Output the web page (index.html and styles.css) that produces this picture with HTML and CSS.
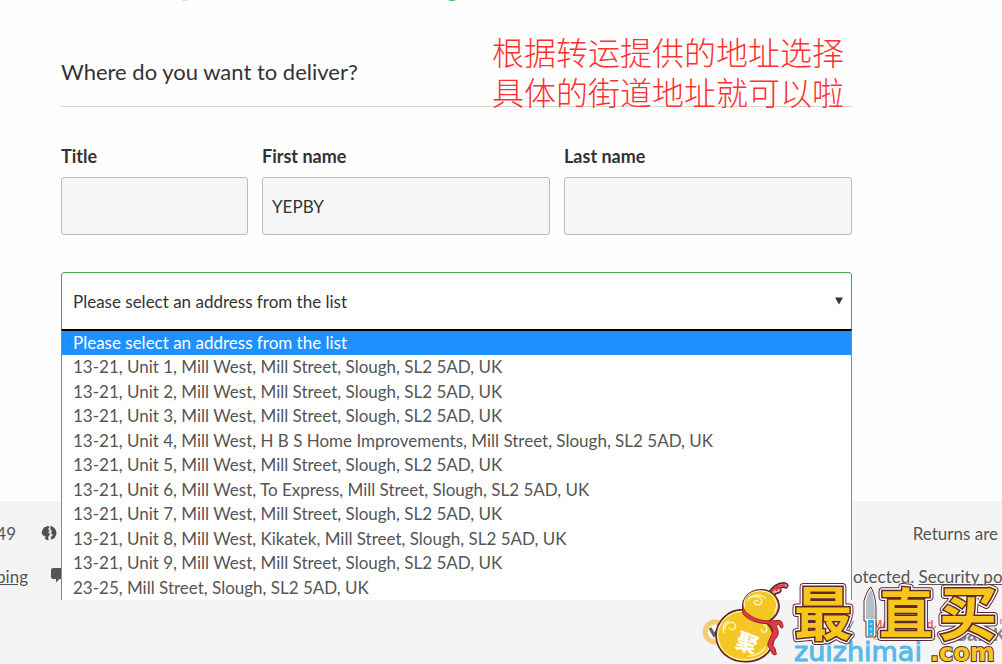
FILE: index.html
```html
<!DOCTYPE html>
<html lang="en">
<head>
<meta charset="utf-8">
<meta name="viewport" content="width=device-width, initial-scale=1">
<title>Delivery details</title>
<link rel="stylesheet" href="styles.css">
</head>
<body>
<div class="steps" aria-hidden="true"><span class="step"></span><span class="step step-active"></span></div>

<main class="delivery">
  <header class="section-head">
    <h1 class="section-title">Where do you want to deliver?</h1>
    <p class="note" lang="zh-CN">根据转运提供的地址选择<br>具体的街道地址就可以啦</p>
  </header>

  <form class="form">
    <div class="names">
      <div class="field">
        <label for="title">Title</label>
        <input id="title" type="text">
      </div>
      <div class="field">
        <label for="first-name">First name</label>
        <input id="first-name" type="text" value="YEPBY">
      </div>
      <div class="field">
        <label for="last-name">Last name</label>
        <input id="last-name" type="text">
      </div>
    </div>

    <div class="address">
      <select class="address-select" aria-label="Address">
        <option>Please select an address from the list</option>
      </select>
      <svg class="arrow" viewBox="0 0 8 8" aria-hidden="true"><path d="M0 0.5H8L4 7.5Z"/></svg>
      <ul class="options" role="listbox" aria-label="Addresses">
        <li class="option option-active" role="option" aria-selected="true">Please select an address from the list</li>
        <li class="option" role="option">13-21, Unit 1, Mill West, Mill Street, Slough, SL2 5AD, UK</li>
        <li class="option" role="option">13-21, Unit 2, Mill West, Mill Street, Slough, SL2 5AD, UK</li>
        <li class="option" role="option">13-21, Unit 3, Mill West, Mill Street, Slough, SL2 5AD, UK</li>
        <li class="option" role="option">13-21, Unit 4, Mill West, H B S Home Improvements, Mill Street, Slough, SL2 5AD, UK</li>
        <li class="option" role="option">13-21, Unit 5, Mill West, Mill Street, Slough, SL2 5AD, UK</li>
        <li class="option" role="option">13-21, Unit 6, Mill West, To Express, Mill Street, Slough, SL2 5AD, UK</li>
        <li class="option" role="option">13-21, Unit 7, Mill West, Mill Street, Slough, SL2 5AD, UK</li>
        <li class="option" role="option">13-21, Unit 8, Mill West, Kikatek, Mill Street, Slough, SL2 5AD, UK</li>
        <li class="option" role="option">13-21, Unit 9, Mill West, Mill Street, Slough, SL2 5AD, UK</li>
        <li class="option" role="option">23-25, Mill Street, Slough, SL2 5AD, UK</li>
      </ul>
    </div>
  </form>
</main>

<footer class="footer">
  <div class="footer-row">
    <div class="footer-left footer-phone">
      <span>49</span>
      <svg class="icon" viewBox="0 0 16 16" aria-hidden="true"><circle cx="8" cy="8" r="7" fill="#dfe3e6"/><path fill="#4f4f4f" d="M1 6L3 2.500 7 1 8.500 2 7 4 8.500 5.500 7 7.500 9 9 7 12 7.500 15.400 4 14 4.500 11 2 10.500 .6 8ZM9.500 .8L13 2.500 15 5.500 15.500 9 13.500 13 10.500 14.800 10 12 12 10 10 8 11 6 9.500 4Z"/></svg>
    </div>
    <p class="footer-right footer-end">Returns are</p>
  </div>
  <div class="footer-row">
    <div class="footer-left">
      <a href="#">ping</a>
      <svg class="icon" viewBox="0 0 16 16" aria-hidden="true"><path fill="#555" d="M2 0H14Q16 0 16 2V9Q16 11 14 11H8.500L5 14.500V11H2Q0 11 0 9V2Q0 0 2 0Z"/></svg>
    </div>
    <p class="footer-right">otected. <a href="#">Security policy</a></p>
  </div>
  <div class="badges">
    <span class="badge norton"><svg class="tick" viewBox="0 0 26 28" aria-hidden="true"><circle cx="13" cy="14" r="10" fill="none" stroke="#fbb93f" stroke-width="5"/><path d="M8 10L12 17 24 2" fill="none" stroke="#222" stroke-width="3"/></svg><b>Norton</b></span>
    <span class="badge visa"><i>Verified by</i><b>VISA</b></span>
    <span class="badge mastercard"><b>MasterCard.</b><b>SecureCode</b></span>
    <span class="badge amex"><small>AMERICAN EX</small><b>SafeKey</b></span>
  </div>
</footer>

<svg class="watermark" viewBox="0 0 302 94" role="img" aria-label="最值买 zuizhimai.com">
  <defs>
    <g id="brand" class="brand"><text x="94" y="65">最</text><text class="brand-mid" x="179" y="64">直</text><text x="239" y="65">买</text></g>
  </defs>
  <g transform="scale(.33333)" stroke-linecap="round" stroke-linejoin="round">
    <path d="M204 73C214 52 233 37 255 39Q270 44 259 54Q246 48 239 56Q247 61 239 67Q225 70 220 77Z" fill="#f3b2b6" stroke="#5c2930" stroke-width="5"/>
    <path d="M215 65Q230 44 254 46M229 60Q234 50 242 57" fill="none" stroke="#e5343d" stroke-width="6"/>
    <path d="M130 120C88 116 48 153 48 196C49 245 89 275 135 275C184 276 216 246 221 211C223 188 213 171 199 157C234 143 247 108 229 83C209 50 158 53 137 82C128 94 127 108 130 120Z" fill="#f5c726" stroke="#5c2930" stroke-width="5"/>
    <path d="M132 124C91 121 53 156 53 196C55 241 91 270 135 270C180 271 211 244 216 211M133 111C126 76 159 60 188 63C224 67 240 101 223 130" fill="none" stroke="#fff" stroke-width="3"/>
    <path d="M143 91C153 73 184 76 185 94C184 108 165 107 162 96Q166 87 174 94M151 84Q173 66 196 84M76 177C73 157 101 150 106 166C109 178 93 184 88 173M72 188Q64 163 85 153M145 259Q180 257 196 231M186 158Q205 170 198 186Q186 190 184 178" fill="none" stroke="#fff5bd" stroke-width="4"/>
    <path d="M128 113C147 144 182 154 214 153L239 151Q252 158 248 174Q240 176 237 162Q225 163 234 181C239 202 219 207 217 225Q228 235 229 253Q218 260 211 239L203 226C205 204 224 191 216 173Q210 163 204 161C172 161 146 151 129 132Z" fill="#e63740" stroke="#8d2932" stroke-width="3"/>
  </g>
  <text class="seal" x="36" y="81" transform="rotate(20 47 73)">聚</text>
  <text class="domain" x="94" y="91">zuizhimai</text>
  <use href="#brand" class="brand-edge"/>
  <use href="#brand" class="brand-gap"/>
  <use href="#brand" class="brand-face"/>
  <g>
    <path d="M166 67V51H164V31Q167 20 171 17Q176 27 176 40V67Z" fill="#fff" stroke="#5c2930" stroke-width="1"/>
    <path d="M166 49V31Q168 22 171 19Q175 30 175 49Z" fill="#b4bfc9"/>
    <path d="M168 50H174V66H168Z" fill="#36b1e3"/>
    <path d="M171 53V65" stroke="#fff" stroke-dasharray="2 3"/>
  </g>
  <text class="tld" x="230" y="91">.com</text>
</svg>
</body>
</html>
```
FILE: styles.css
```css
* { box-sizing: border-box; }

body {
  margin: 0;
  position: relative;
  min-height: 100vh;
  display: flex;
  flex-direction: column;
  overflow-x: hidden;
  background: #fefefe;
  color: #333;
  font: 17px/24px Lato, "Noto Sans CJK SC", sans-serif;
}

h1, p, ul { margin: 0; padding: 0; }

.steps {
  display: flex;
  align-items: flex-end;
  gap: 251px;
  height: 1px;
  padding-left: 177px;
}
.step {
  flex: none;
  width: 16px;
  height: 16px;
  border-radius: 50%;
  background: #dcdcd0;
}
.step-active { background: #4cb85c; }

.delivery { padding: 55px 150px 170px 61px; }

.section-head {
  position: relative;
  padding-bottom: 18px;
  border-bottom: 1px solid #d8d8cc;
}
.section-title {
  font-size: 22px;
  line-height: 32px;
  font-weight: 400;
}
.note {
  position: absolute;
  top: -25px;
  right: 8px;
  color: #ff3030;
  font: 300 32px/40px "Noto Sans CJK SC", sans-serif;
  white-space: nowrap;
}

.form {
  display: flex;
  flex-direction: column;
  gap: 37px;
  padding-top: 37px;
}
.names {
  display: grid;
  grid-template-columns: 187fr 288fr 288fr;
  gap: 14px;
}
.field {
  display: flex;
  flex-direction: column;
  gap: 9px;
  min-width: 0;
}
.field label { font-size: 18px; font-weight: 700; }
.field input {
  width: 100%;
  height: 58px;
  padding: 0 9px;
  border: 1px solid #bbb;
  border-radius: 3px;
  background: #f6f6f6;
  color: inherit;
  font: inherit;
}

.address { position: relative; }
.address-select {
  display: block;
  width: 100%;
  height: 59px;
  padding: 0 11px;
  border: 1px solid #4aa651;
  border-radius: 3px;
  background: #fff;
  color: inherit;
  font: inherit;
  appearance: none;
}
.arrow {
  position: absolute;
  top: 25px;
  right: 9px;
  width: 8px;
  height: 8px;
  fill: #333;
}
.options {
  position: absolute;
  top: 57px;
  left: 0;
  right: 0;
  z-index: 1;
  display: grid;
  grid-auto-rows: 1fr;
  min-height: 271px;
  border: 1px solid #6a8cc0;
  border-top: 2px solid #000;
  border-bottom: 0;
  background: #fff;
  color: #555;
  list-style: none;
}
.option {
  padding: 0 11px;
  white-space: nowrap;
  overflow: hidden;
}
.option-active { background: #1e90ff; color: #fff; }

.footer {
  flex: 1;
  display: flex;
  flex-direction: column;
  gap: 19px;
  padding-top: 21px;
  background: #f4f4f4;
  color: #555;
}
.footer a { color: inherit; }
.footer-row {
  display: flex;
  justify-content: space-between;
}
.footer-left {
  display: flex;
  justify-content: flex-end;
  gap: 23px;
  width: 67px;
  overflow: hidden;
}
.footer-phone {
  gap: 25px;
  padding-right: 10px;
}
.icon {
  flex: none;
  width: 16px;
  height: 16px;
  margin-top: 3px;
}
.footer-right {
  width: 150px;
  padding-left: 1px;
  white-space: nowrap;
  overflow: hidden;
}
.footer-end { padding-right: 4px; text-align: right; }

.badges {
  display: flex;
  justify-content: flex-end;
  gap: 18px;
  height: 40px;
  opacity: 0.7;
}
.badge {
  display: flex;
  flex-direction: column;
  padding-top: 10px;
  overflow: hidden;
  font: 12px/12px "Liberation Sans", sans-serif;
}
.norton {
  flex-direction: row;
  gap: 2px;
  width: 75px;
  font-size: 13px;
}
.tick { flex: none; width: 26px; height: 28px; }
.visa { width: 60px; color: #28488f; text-align: center; }
.mastercard { width: 64px; color: #e4272d; font-size: 11px; }
.mastercard b + b { color: #f59b23; }
.amex { width: 47px; font-size: 18px; line-height: 18px; }
.amex small { font-size: 8px; line-height: 8px; white-space: nowrap; }

.watermark {
  position: absolute;
  right: 0;
  bottom: 0;
  z-index: 2;
  width: 302px;
  height: 94px;
}
.brand { font: 700 58px "Noto Sans CJK SC", sans-serif; }
.brand-mid { font-size: 54px; }
.brand-edge { fill: #5c2930; stroke: #5c2930; stroke-width: 8px; stroke-linejoin: round; }
.brand-gap { fill: #fff; stroke: #fff; stroke-width: 6px; stroke-linejoin: round; }
.brand-face { fill: #f8c51c; stroke: #5c2930; stroke-width: 3px; paint-order: stroke; }
.seal { fill: #fff; font: 900 22px "Noto Sans CJK SC", sans-serif; }
.domain { fill: #57b9ea; stroke: #57b9ea; stroke-width: 1px; font: 27px "DejaVu Sans", sans-serif; }
.tld {
  fill: #f8c51c;
  stroke: #5c2930;
  stroke-width: 2px;
  paint-order: stroke;
  font: 700 24px "DejaVu Sans", sans-serif;
}
```
